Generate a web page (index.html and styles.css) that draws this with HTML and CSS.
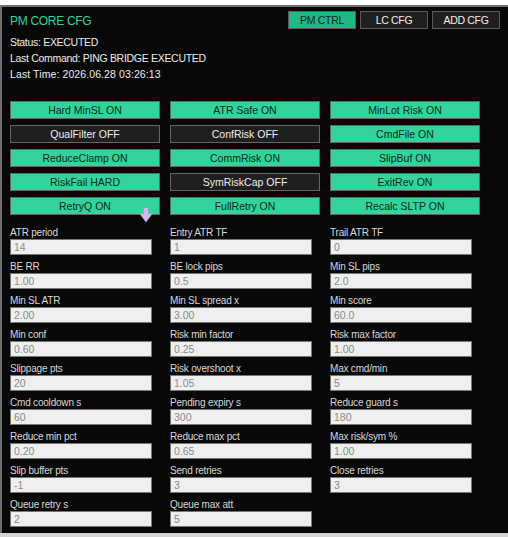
FILE: index.html
```html
<!DOCTYPE html>
<html lang="en">
  <head>
    <meta charset="UTF-8" />
    <meta name="viewport" content="width=device-width, initial-scale=1.0" />
    <title>PM CORE CFG</title>
    <link rel="stylesheet" href="styles.css">
  </head>
  <body>
    <div class="panel">
      <div class="header">
        <div class="title">PM CORE CFG</div>
        <div class="tabs">
          <button class="tab tab_on">PM CTRL</button>
          <button class="tab">LC CFG</button>
          <button class="tab">ADD CFG</button>
        </div>
      </div>
      <div class="status">
        <p>Status: EXECUTED</p>
        <p>Last Command: PING BRIDGE EXECUTED</p>
        <p class="status_time">Last Time: 2026.06.28 03:26:13</p>
      </div>

      <div class="toggles">
        <button class="toggle on">Hard MinSL ON</button>
        <button class="toggle on">ATR Safe ON</button>
        <button class="toggle on">MinLot Risk ON</button>
        <button class="toggle">QualFilter OFF</button>
        <button class="toggle">ConfRisk OFF</button>
        <button class="toggle on">CmdFile ON</button>
        <button class="toggle on">ReduceClamp ON</button>
        <button class="toggle on">CommRisk ON</button>
        <button class="toggle on">SlipBuf ON</button>
        <button class="toggle on">RiskFail HARD</button>
        <button class="toggle">SymRiskCap OFF</button>
        <button class="toggle on">ExitRev ON</button>
        <div class="toggle_wrap">
          <button class="toggle on">RetryQ ON</button>
          <svg class="cursor" width="14" height="16" viewBox="0 0 14 16">
            <path d="M5 1h4v6h4l-6 8-6-8h4z" fill="#d9b8f2" stroke="#c9a4ee" stroke-width="0.5" />
          </svg>
        </div>
        <button class="toggle on">FullRetry ON</button>
        <button class="toggle on">Recalc SLTP ON</button>
      </div>

      <div class="fields">
        <label class="field">ATR period<input value="14" disabled></label>
        <label class="field">Entry ATR TF<input value="1" disabled></label>
        <label class="field">Trail ATR TF<input value="0" disabled></label>
        <label class="field">BE RR<input value="1.00" disabled></label>
        <label class="field">BE lock pips<input value="0.5" disabled></label>
        <label class="field">Min SL pips<input value="2.0" disabled></label>
        <label class="field">Min SL ATR<input value="2.00" disabled></label>
        <label class="field">Min SL spread x<input value="3.00" disabled></label>
        <label class="field">Min score<input value="60.0" disabled></label>
        <label class="field">Min conf<input value="0.60" disabled></label>
        <label class="field">Risk min factor<input value="0.25" disabled></label>
        <label class="field">Risk max factor<input value="1.00" disabled></label>
        <label class="field">Slippage pts<input value="20" disabled></label>
        <label class="field">Risk overshoot x<input value="1.05" disabled></label>
        <label class="field">Max cmd/min<input value="5" disabled></label>
        <label class="field">Cmd cooldown s<input value="60" disabled></label>
        <label class="field">Pending expiry s<input value="300" disabled></label>
        <label class="field">Reduce guard s<input value="180" disabled></label>
        <label class="field">Reduce min pct<input value="0.20" disabled></label>
        <label class="field">Reduce max pct<input value="0.65" disabled></label>
        <label class="field">Max risk/sym %<input value="1.00" disabled></label>
        <label class="field">Slip buffer pts<input value="-1" disabled></label>
        <label class="field">Send retries<input value="3" disabled></label>
        <label class="field">Close retries<input value="3" disabled></label>
        <label class="field">Queue retry s<input value="2" disabled></label>
        <label class="field">Queue max att<input value="5" disabled></label>
      </div>
    </div>
  </body>
</html>
```

FILE: styles.css
```css
html,
body {
  height: 100%;
}

body {
  box-sizing: border-box;
  margin: 0;
  background: #d4d4d4;
  border-top: 5px solid #fff;
  font-family: "Liberation Sans", Arial, sans-serif;
  font-size: 10.5px;
  letter-spacing: -0.3px;
  color: #ececec;
  overflow: hidden;
}

.panel {
  box-sizing: border-box;
  width: 508px;
  height: 528px;
  padding: 4px 8px 0 8px;
  background: #080808;
  border-top: 2px solid #6e6e6e;
  border-left: 2px solid #6e6e6e;
}

.header {
  display: flex;
  justify-content: space-between;
  align-items: flex-start;
}

.title {
  color: #35d29b;
  font-size: 12px;
  line-height: 18px;
  margin-top: 1px;
}

.tabs {
  display: flex;
  gap: 4px;
}

button {
  box-sizing: border-box;
  font-family: inherit;
  font-size: 10.5px;
  padding: 0;
  border-radius: 0;
}

.tab {
  width: 68px;
  height: 18px;
  background: #1f1f1f;
  border: 1px solid #5a5a5a;
  color: #f0f0f0;
  letter-spacing: -0.3px;
}

.tab_on {
  background: #1fb886;
  color: #0a2a20;
}

.status {
  margin-top: 4px;
}

.status p {
  margin: 0;
  line-height: 16px;
}

.status .status_time {
  letter-spacing: 0.1px;
}

.toggles {
  display: grid;
  grid-template-columns: repeat(3, 150px);
  column-gap: 10px;
  row-gap: 6px;
  margin-top: 19px;
}

.toggle {
  display: block;
  width: 150px;
  height: 18px;
  background: #1f1f1f;
  border: 1px solid #666;
  color: #f0f0f0;
  letter-spacing: 0;
}

.toggle.on {
  background: #35d29b;
  color: #0a2a20;
}

.toggle_wrap {
  position: relative;
}

.cursor {
  position: absolute;
  left: 129px;
  top: 10px;
}

.fields {
  display: grid;
  grid-template-columns: repeat(3, 142px);
  column-gap: 18px;
  row-gap: 4px;
  margin-top: 10px;
}

.field {
  display: block;
  height: 30px;
  line-height: 16px;
  font-size: 10px;
  letter-spacing: -0.2px;
  color: #d8d8d8;
}

.field input {
  display: block;
  box-sizing: border-box;
  width: 142px;
  height: 16px;
  margin: -2px 0 0 0;
  padding: 0 3px;
  background: #efefef;
  border: 1px solid #767676;
  font-family: inherit;
  font-size: 10.5px;
  letter-spacing: 0;
  color: #8a8a8a;
  -webkit-text-fill-color: #8a8a8a;
  opacity: 1;
}
```
